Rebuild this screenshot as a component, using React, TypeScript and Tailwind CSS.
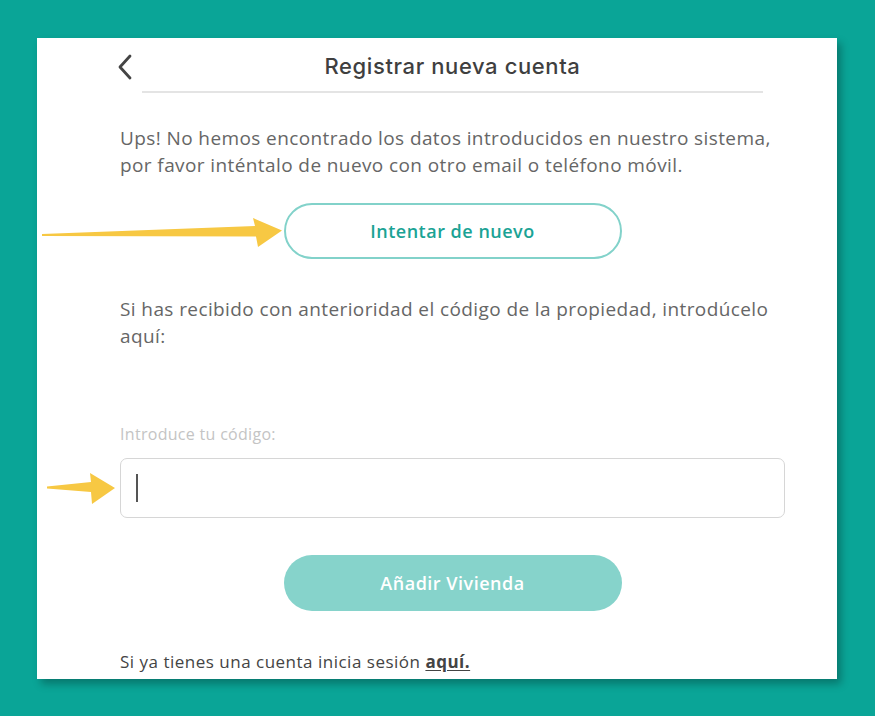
import React from 'react'

function Arrow({ className, w, h, points }: { className: string; w: number; h: number; points: string }) {
  return (
    <svg className={className} width={w} height={h} viewBox={`0 0 ${w} ${h}`}>
      <polygon points={points} fill="#f7c843" />
    </svg>
  )
}

export default function App() {
  return (
    <div
      className="relative w-[875px] h-[716px] bg-[#0aa597] pt-[38px] pl-[37px] overflow-hidden"
      style={{ fontFamily: '"Open Sans", "Noto Sans", sans-serif' }}
    >
      <div className="w-[800px] h-[641px] bg-white overflow-hidden shadow-[4px_5px_8px_rgba(0,0,0,0.28)] pl-[83px] pr-[52px] pt-[12px]">
        {/* header */}
        <div className="grid grid-cols-[40px_1fr_40px] items-center h-[29px]">
          <svg width="16" height="26" viewBox="0 0 16 26" className="-ml-[3px]">
            <path d="M13 2 L3 13 L13 24" fill="none" stroke="#444" strokeWidth="2.8" strokeLinecap="round" strokeLinejoin="round" />
          </svg>
          <h1
            className="text-center text-[22px] font-medium text-[#3f3f3f] tracking-[0.6px]"
            style={{ fontFamily: 'Inter, "Noto Sans", sans-serif' }}
          >
            Registrar nueva cuenta
          </h1>
          <span />
        </div>
        <div className="mx-[22px] mt-[12px] h-[2px] bg-[#e4e4e4]" />

        <p className="mt-[32px] text-[19px] leading-[27px] tracking-[0.4px] text-[#666]">
          Ups! No hemos encontrado los datos introducidos en nuestro sistema,
          <br />
          por favor inténtalo de nuevo con otro email o teléfono móvil.
        </p>

        <div className="flex justify-center mt-[24px]">
          <button className="w-[338px] h-[56px] rounded-full border-2 border-[#82d2ca] text-[#1ba395] text-[18px] font-semibold tracking-[0.5px]">
            Intentar de nuevo
          </button>
        </div>

        <p className="mt-[37px] text-[19px] leading-[27px] tracking-[0.4px] text-[#666]">
          Si has recibido con anterioridad el código de la propiedad, introdúcelo aquí:
        </p>

        <label className="block mt-[73px] text-[16px] leading-[22px] tracking-[0.3px] text-[#c4c4c4]">
          Introduce tu código:
        </label>
        <div className="mt-[13px] h-[60px] rounded-[7px] border border-[#d6d6d6] flex items-center pl-[15px]">
          <span className="w-[1.5px] h-[28px] bg-[#555]" />
        </div>

        <div className="flex justify-center mt-[37px]">
          <button className="w-[338px] h-[56px] rounded-full bg-[#86d3cb] text-white text-[18px] font-semibold tracking-[0.5px]">
            Añadir Vivienda
          </button>
        </div>

        <p className="mt-[39px] text-[17px] leading-[24px] tracking-[0.5px] text-[#444]">
          Si ya tienes una cuenta inicia sesión{' '}
          <a className="font-bold underline underline-offset-2">aquí.</a>
        </p>
      </div>

      {/* annotation arrows */}
      <Arrow
        className="absolute left-[42px] top-[215px] pointer-events-none"
        w={241}
        h={34}
        points="0,19 213,11 211,3 240,15.5 216,32 214,21.5 0,21"
      />
      <Arrow
        className="absolute left-[45px] top-[470px] pointer-events-none"
        w={72}
        h={36}
        points="2,16.5 46,12 45,3 70,18 47,34 46,22 2,18.5"
      />
    </div>
  )
}
